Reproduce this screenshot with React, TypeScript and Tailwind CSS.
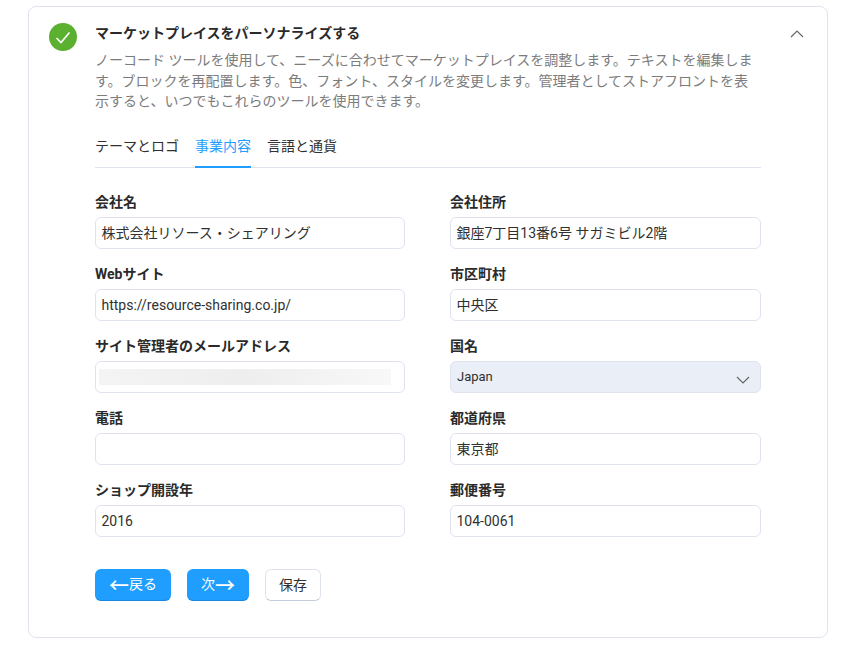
function Field({ label, value, select, blurred }: { label: string; value?: string; select?: boolean; blurred?: boolean }) {
  return (
    <div className="flex flex-col">
      <label className="h-[20px] text-[14px] leading-[20px] font-bold text-[#2a2a2a]">{label}</label>
      <div
        className={
          select
            ? 'mt-[5px] flex h-[32px] items-center justify-between rounded-[6px] border border-[#dfe3ef] bg-[#e9eef7] pl-[6px] pr-[10px] text-[13px] text-[#303030]'
            : 'mt-[5px] flex h-[32px] items-center rounded-[6px] border border-[#dfe3ef] bg-white px-[5.5px] text-[14px] text-[#303030]'
        }
      >
        {blurred && <div className="mr-[8px] ml-[-2.5px] h-[16px] flex-1 bg-gradient-to-r from-[#f4f4f4] via-[#eeeeee] to-[#f8f8f8]" />}
        {value && <span>{value}</span>}
        {select && (
          <svg width="14" height="8" viewBox="0 0 14 8" fill="none" className="mt-[5px]">
            <path d="M1 1l6 6 6-6" stroke="#666" strokeWidth="1.2" />
          </svg>
        )}
      </div>
    </div>
  );
}

export default function App() {
  return (
    <div className="min-h-[645px] bg-white pt-[6px] pl-[28px] font-['Roboto','Noto_Sans_CJK_JP',sans-serif]">
      <div className="flex h-[632px] w-[800px] rounded-[8px] border border-[#dfe3ef] pt-[16px] pl-[20px]">
        <div className="flex h-[28px] w-[28px] shrink-0 items-center justify-center rounded-full bg-[#5bb030]">
          <svg width="16" height="13" viewBox="0 0 16 13" fill="none">
            <path d="M1.5 7l4.5 4.5L14.5 1.5" stroke="#fff" strokeWidth="1.6" />
          </svg>
        </div>
        <div className="ml-[18px] w-[666px] shrink-0">
          <h2 className="text-[14px] leading-[20px] font-bold text-[#2a2a2a]">マーケットプレイスをパーソナライズする</h2>
          <p className="mt-[7px] w-[660px] text-[14px] leading-[20.5px] text-[#7c7c7c]">
            ノーコード ツールを使用して、ニーズに合わせてマーケットプレイスを調整します。テキストを編集します。ブロックを再配置します。色、フォント、スタイルを変更します。管理者としてストアフロントを表示すると、いつでもこれらのツールを使用できます。
          </p>
          <div className="mt-[15.5px] flex h-[41px] gap-[16px] border-b border-[#dfe3ef] text-[14px] leading-[38px] text-[#303030]">
            <span>テーマとロゴ</span>
            <span className="h-[41px] border-b-2 border-[#1f9eff] text-[#1f9eff]">事業内容</span>
            <span>言語と通貨</span>
          </div>
          <div className="mt-[24px] grid grid-cols-[310px_311px] gap-x-[45px] gap-y-[15px]">
            <Field label="会社名" value="株式会社リソース・シェアリング" />
            <Field label="会社住所" value="銀座7丁目13番6号 サガミビル2階" />
            <Field label="Webサイト" value="https://resource-sharing.co.jp/" />
            <Field label="市区町村" value="中央区" />
            <Field label="サイト管理者のメールアドレス" blurred />
            <Field label="国名" value="Japan" select />
            <Field label="電話" />
            <Field label="都道府県" value="東京都" />
            <Field label="ショップ開設年" value="2016" />
            <Field label="郵便番号" value="104-0061" />
          </div>
          <div className="mt-[32px] flex gap-[16px] text-[14px]">
            <button className="flex h-[32px] w-[76px] items-center justify-center rounded-[6px] border-b border-[#1a86de] bg-[#1f9eff] text-white">
              <span className="font-['Noto_Sans_CJK_JP'] text-[20px] leading-none font-medium">←</span>戻る
            </button>
            <button className="flex h-[32px] w-[62px] items-center justify-center rounded-[6px] border-b border-[#1a86de] bg-[#1f9eff] text-white">
              次<span className="font-['Noto_Sans_CJK_JP'] text-[20px] leading-none font-medium">→</span>
            </button>
            <button className="h-[32px] w-[56px] rounded-[6px] border border-[#dfe3ef] border-b-[#c4cbdc] bg-white text-[#303030]">保存</button>
          </div>
        </div>
        <svg width="14" height="8" viewBox="0 0 14 8" fill="none" className="mt-[7px] ml-[29px]">
          <path d="M1 7l6-6 6 6" stroke="#666" strokeWidth="1.2" />
        </svg>
      </div>
    </div>
  );
}
